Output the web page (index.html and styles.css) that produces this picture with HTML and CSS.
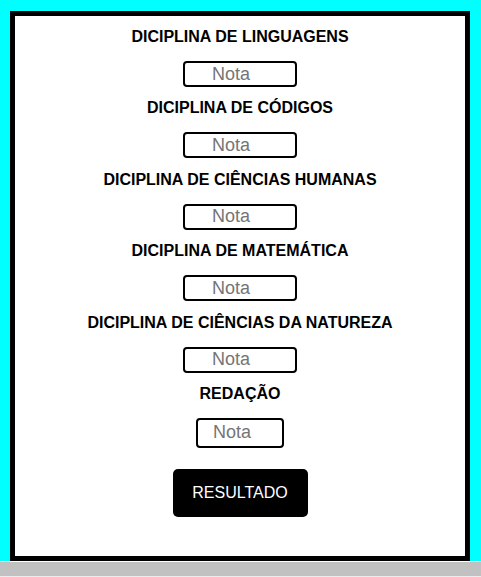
FILE: index.html
```html
<!DOCTYPE html>
<html lang="pt-BR">
<head>
<meta charset="utf-8">
<title>Notas</title>
<link rel="stylesheet" href="styles.css">
</head>
<body>
<div class="page">
  <div class="box">
    <form class="form">
      <h3 class="label">DICIPLINA DE LINGUAGENS</h3>
      <input class="nota" type="text" placeholder="Nota">
      <h3 class="label">DICIPLINA DE CÓDIGOS</h3>
      <input class="nota" type="text" placeholder="Nota">
      <h3 class="label">DICIPLINA DE CIÊNCIAS HUMANAS</h3>
      <input class="nota" type="text" placeholder="Nota">
      <h3 class="label">DICIPLINA DE MATEMÁTICA</h3>
      <input class="nota" type="text" placeholder="Nota">
      <h3 class="label">DICIPLINA DE CIÊNCIAS DA NATUREZA</h3>
      <input class="nota" type="text" placeholder="Nota">
      <h3 class="label">REDAÇÃO</h3>
      <input class="nota nota-redacao" type="text" placeholder="Nota">
      <button class="resultado" type="button">RESULTADO</button>
    </form>
  </div>
</div>
<div class="scrollbar"></div>
</body>
</html>
```
FILE: styles.css
```css
html, body {
  margin: 0;
  padding: 0;
  overflow: hidden;
}

body {
  font-family: "Liberation Sans", Arial, sans-serif;
  background: #ffffff;
}

.page {
  box-sizing: border-box;
  height: 561px;
  padding: 11px 11px 0 10px;
  background: #00ffff;
}

.box {
  box-sizing: border-box;
  width: 460px;
  height: 550px;
  border: 5px solid #000;
  background: #fff;
}

.form {
  display: flex;
  flex-direction: column;
  align-items: center;
  padding-top: 12px;
  margin: 0;
}

.label {
  margin: 0;
  font-size: 16px;
  line-height: 18px;
  font-weight: bold;
  color: #000;
  text-align: center;
}

.nota {
  box-sizing: border-box;
  width: 114px;
  height: 26px;
  margin: 15px 0 12.4px;
  padding: 0 0 0 27px;
  border: 2px solid #000;
  border-radius: 4px;
  font-family: "Liberation Sans", Arial, sans-serif;
  font-size: 18px;
  color: #000;
  background: #fff;
  outline: none;
}

.nota::placeholder {
  color: #757575;
}

.nota-redacao {
  width: 88px;
  height: 30px;
  padding-left: 15px;
  margin: 15px 0 21px;
}

.resultado {
  width: 135px;
  height: 48px;
  border: none;
  border-radius: 5px;
  background: #000;
  color: #fff;
  font-family: "Liberation Sans", Arial, sans-serif;
  font-size: 16px;
  padding: 0;
}

.scrollbar {
  height: 14px;
  border-top: 1px solid #ffffff;
  border-bottom: 1px solid #ececec;
  background: #c1c1c1;
}
```
